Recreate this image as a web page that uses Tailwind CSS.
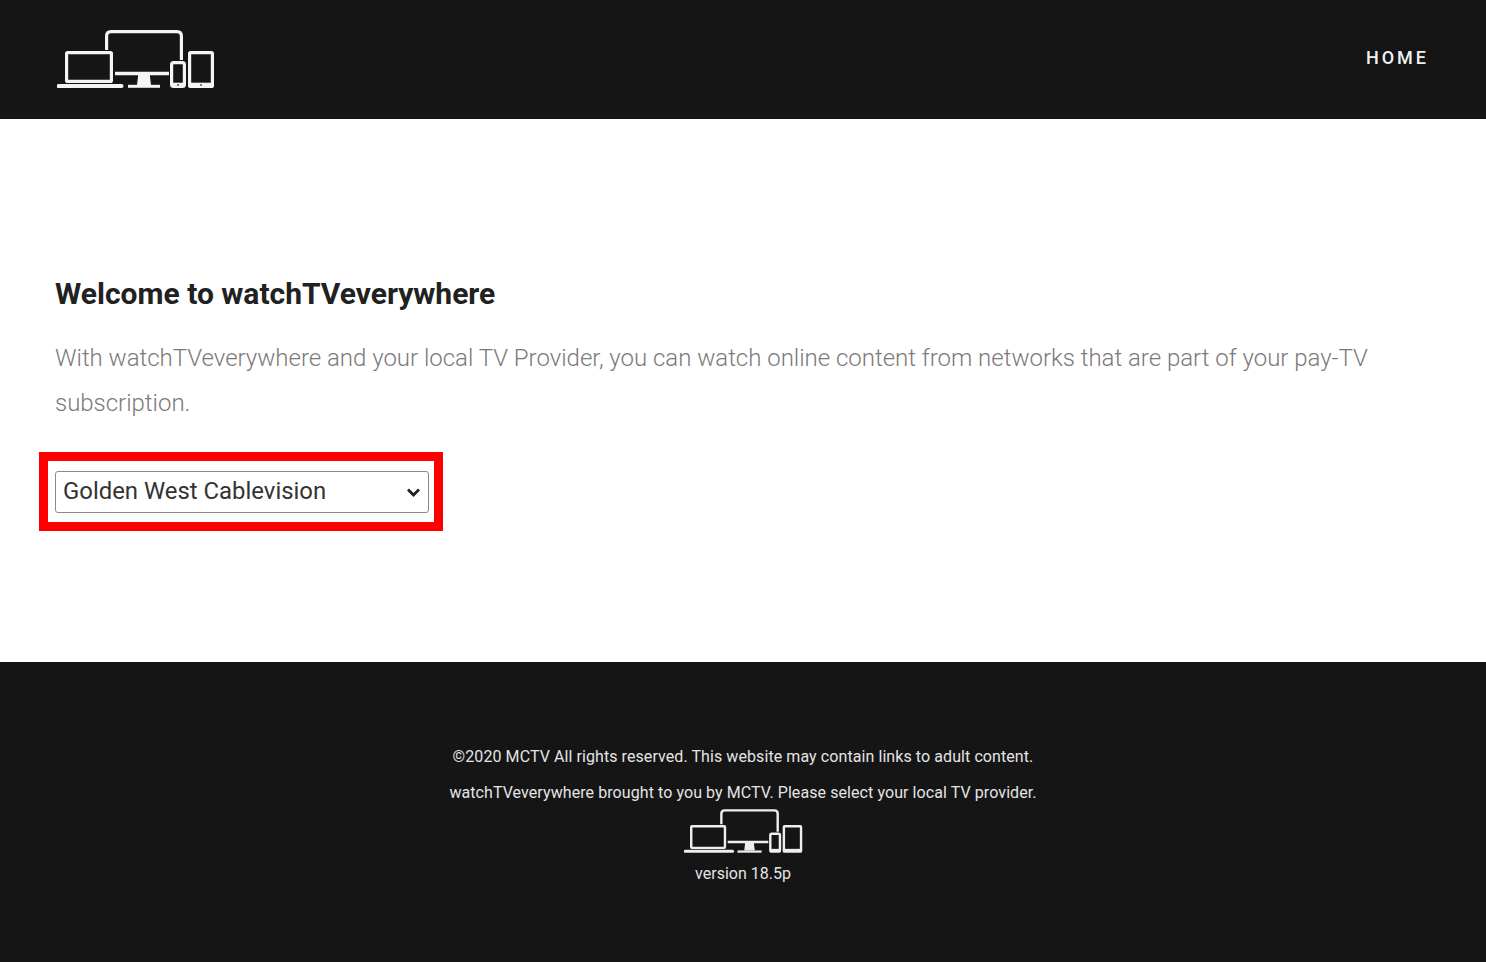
<!DOCTYPE html>
<html>
  <head>
    <script src="https://cdn.jsdelivr.net/npm/@tailwindcss/browser@4"></script>
    <title>watchTVeverywhere</title>
  </head>
  <body class="bg-white font-['Roboto',sans-serif]">
    <div class="h-[962px] flex flex-col overflow-hidden">
      <header class="h-[119px] shrink-0 bg-[#151515] flex justify-between pl-[57px] pr-[57px]">
        <svg class="mt-[30px] w-[158px] h-[58px] blur-[0.4px]" viewBox="0 0 158 58" fill="none" stroke="#f4f4f4" stroke-width="3.2">
          <rect x="9.600" y="22.600" width="44.800" height="28.800" rx="1" />
          <path d="M1.500 56h63" stroke-width="4" stroke-linecap="round" />
          <path d="M49.600 20V6q0-4.400 4.400-4.400h66q4.400 0 4.400 4.400v24" />
          <path d="M58 43.500h54" stroke-width="3.400" />
          <path d="M81 45h12v1.500l1 8.500h-14l1-8.500z" fill="#f4f4f4" stroke="none" />
          <path d="M71 56.300h32" stroke-width="3" />
          <rect x="114.600" y="32.600" width="12.800" height="23.800" rx="2" />
          <path d="M114 54.500h14" stroke-width="3.600" />
          <rect x="132.600" y="22.600" width="22.800" height="33.800" rx="1" />
          <path d="M132 54.500h24" stroke-width="3.600" />
          <path d="M120 55h2M143 55h2" stroke="#555555" stroke-width="1.500" />
        </svg>
        <a href="#" class="mt-[46px] h-[24px] text-[18px] leading-[24px] font-medium tracking-[3px] text-[#f2f2f2]">HOME</a>
      </header>

      <main class="h-[543px] shrink-0 bg-white px-[55px] pt-[156px]">
        <h1 class="text-[30px] leading-[38px] font-bold text-[#212121]">Welcome to watchTVeverywhere</h1>
        <p class="mt-[23px] text-[24px] leading-[45px] font-light tracking-[-0.015px] text-[#7a7a7a] w-[1340px]">
          With watchTVeverywhere and your local TV Provider, you can watch online content from networks that are part of your pay-TV subscription.
        </p>
        <div class="mt-[26px] -ml-[16px] w-[404px] h-[79px] border-[9px] border-[#ff0000] pl-[7px] pt-[10px]">
          <div class="relative w-[374px] h-[42px]">
            <select class="appearance-none w-full h-full bg-white border border-[#8a8a8a] rounded-[3px] pl-[7px] text-[23.9px] text-[#333333] font-['Roboto',sans-serif]">
              <option>Golden West Cablevision</option>
            </select>
            <svg class="absolute right-[9px] top-[17px] w-[13px] h-[9px] pointer-events-none" viewBox="0 0 13 9" fill="none" stroke="#222222" stroke-width="2.800">
              <path d="M1 1.500l5.500 5.500l5.500-5.500" />
            </svg>
          </div>
        </div>
      </main>

      <footer class="flex-1 bg-[#151515] flex flex-col items-center pt-[83px] text-[16px] text-[#e4e4e4]">
        <p class="leading-[24px] tracking-[0.08px]">©2020 MCTV All rights reserved. This website may contain links to adult content.</p>
        <p class="mt-[12px] leading-[24px] tracking-[0.08px]">watchTVeverywhere brought to you by MCTV. Please select your local TV provider.</p>
        <svg class="mt-[4px] w-[119px] h-[44px] blur-[0.4px]" viewBox="0 0 158 58" fill="none" stroke="#eeeeee" stroke-width="3.200">
          <rect x="9.600" y="22.600" width="44.800" height="28.800" rx="1" />
          <path d="M1.500 56h63" stroke-width="4" stroke-linecap="round" />
          <path d="M49.600 20V6q0-4.400 4.400-4.400h66q4.400 0 4.400 4.400v24" />
          <path d="M58 43.500h54" stroke-width="3.400" />
          <path d="M81 45h12v1.500l1 8.500h-14l1-8.500z" fill="#eeeeee" stroke="none" />
          <path d="M71 56.300h32" stroke-width="3" />
          <rect x="114.600" y="32.600" width="12.800" height="23.800" rx="2" />
          <path d="M114 54.500h14" stroke-width="3.600" />
          <rect x="132.600" y="22.600" width="22.800" height="33.800" rx="1" />
          <path d="M132 54.500h24" stroke-width="3.600" />
        </svg>
        <p class="mt-[9px] leading-[24px]">version 18.5p</p>
      </footer>
    </div>
  </body>
</html>
